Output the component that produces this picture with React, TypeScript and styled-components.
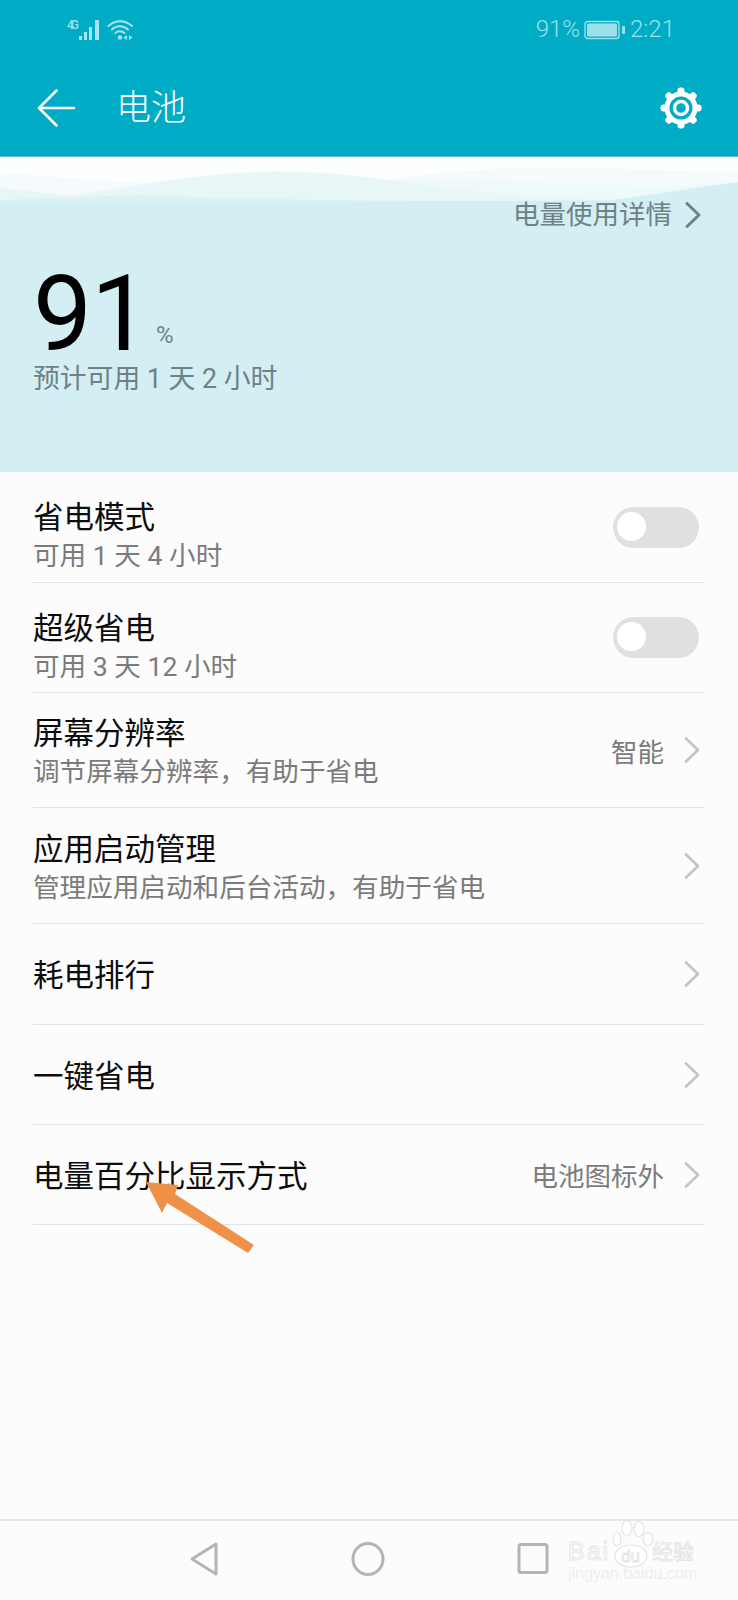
import React from "react";
import styled, { createGlobalStyle } from "styled-components";

const GlobalStyle = createGlobalStyle`
  html, body {
    margin: 0;
    padding: 0;
    background: #fcfcfc;
  }
  * {
    box-sizing: border-box;
  }
`;

const FONT = `Roboto, "Noto Sans CJK SC", sans-serif`;

const Page = styled.div`
  position: relative;
  width: 738px;
  height: 1600px;
  display: flex;
  flex-direction: column;
  overflow: hidden;
  background: #fcfcfc;
  font-family: ${FONT};
`;

const Header = styled.header`
  height: 157px;
  flex: none;
  background: #00acc5;
  border-bottom: 1px solid #5cc3d2;
`;

const StatusBar = styled.div`
  height: 59px;
  padding: 17px 63px 0 67px;
  display: flex;
  align-items: flex-start;
  justify-content: space-between;
  color: #9ce0ea;
`;

const StatusGroup = styled.div`
  display: flex;
  align-items: center;
  gap: 4px;
  height: 25px;
`;

const StatusText = styled.span`
  font-size: 24px;
  line-height: 25px;
  font-weight: 300;
`;

const Toolbar = styled.div`
  height: 97px;
  padding: 0 36px 0 37px;
  display: flex;
  align-items: center;
  color: #fff;
`;

const Title = styled.h1`
  margin: 3px 0 0 39px;
  flex: 1;
  font-size: 35px;
  font-weight: 300;
  line-height: 44px;
`;

const Hero = styled.section`
  height: 315px;
  flex: none;
  display: flex;
  flex-direction: column;
  background: #d4eff3;
`;

const Waves = styled.svg`
  display: block;
  flex: none;
`;

const DetailLink = styled.div`
  padding: 1px 35px 0 0;
  display: flex;
  justify-content: flex-end;
  align-items: center;
  gap: 13px;
  height: 27px;
  line-height: 26px;
  font-size: 26.5px;
  color: #6d8186;
`;

const Reading = styled.div`
  margin-top: 37px;
  padding-left: 33px;
  display: flex;
  align-items: flex-end;
  height: 96px;
`;

const Big = styled.span`
  margin-bottom: 6px;
  font-size: 105px;
  line-height: 80px;
  font-weight: 400;
  color: #000;
  letter-spacing: -1px;
`;

const Percent = styled.span`
  margin: 0 0 14px 7px;
  font-size: 24px;
  line-height: 24px;
  color: #6d8186;
`;

const Estimate = styled.div`
  padding-left: 33px;
  font-size: 26.8px;
  line-height: 36px;
  color: #6d8186;
`;

const List = styled.div`
  flex: 1;
  padding: 0 33px;
`;

const Row = styled.div<{ $h: number }>`
  height: ${(p) => p.$h}px;
  display: flex;
  align-items: center;
  border-bottom: 1px solid #e3e3e3;
`;

const RowText = styled.div<{ $drop: number }>`
  flex: 1;
  padding-top: ${(p) => p.$drop}px;
  display: flex;
  flex-direction: column;
`;

const RowTitle = styled.div`
  font-size: 30.5px;
  line-height: 40px;
  color: #0c0c0c;
`;

const RowSub = styled.div`
  font-size: 26.6px;
  line-height: 36px;
  color: #7b7b7b;
`;

const RowValue = styled.span`
  margin-right: 20px;
  font-size: 26.5px;
  color: #7b7b7b;
`;

const Chevron = styled.svg<{ $end: number }>`
  display: block;
  flex: none;
  margin-right: ${(p) => p.$end}px;
`;

const Toggle = styled.div`
  width: 86px;
  height: 41px;
  margin-right: 6px;
  border-radius: 21px;
  background: #e0e0e0;
  padding: 5px 0 0 4px;
  flex: none;
  &::before {
    content: "";
    display: block;
    width: 29px;
    height: 29px;
    border-radius: 50%;
    background: #fff;
  }
`;

const NavBar = styled.nav`
  height: 81px;
  flex: none;
  border-top: 2px solid #e8e8e8;
  padding: 20px 0 0 189px;
  display: flex;
  align-items: flex-start;
  gap: 132px;
`;

const Arrow = styled.svg`
  position: absolute;
  left: 140px;
  top: 1175px;
`;

const Watermark = styled.div`
  position: absolute;
  left: 566px;
  top: 1518px;
  width: 140px;
  height: 64px;
`;

const WatermarkBrand = styled.div`
  position: absolute;
  left: 2px;
  top: 19px;
  font-family: "Liberation Sans", sans-serif;
  font-size: 25px;
  line-height: 28px;
  letter-spacing: 2px;
  color: #fff;
  -webkit-text-stroke: 1px #e6e6e6;
`;

const WatermarkCn = styled.div`
  position: absolute;
  left: 86px;
  top: 19px;
  font-family: "Noto Sans CJK SC", sans-serif;
  font-size: 21px;
  line-height: 26px;
  color: #fff;
  -webkit-text-stroke: 1px #e6e6e6;
`;

const WatermarkUrl = styled.div`
  position: absolute;
  left: 2px;
  top: 47px;
  font-family: "Liberation Sans", sans-serif;
  font-size: 16px;
  line-height: 18px;
  color: #eeeeee;
  white-space: nowrap;
`;

const Paw = styled.svg`
  position: absolute;
  left: 46px;
  top: 2px;
`;

const ChevronIcon = ({ color = "#c4c4c4", w = 2.6, end = 5 }: { color?: string; w?: number; end?: number }) => (
  <Chevron $end={end} width="16" height="26" viewBox="0 0 16 26">
    <path d="M2 1.5 L14 13 L2 24.5" fill="none" stroke={color} strokeWidth={w} strokeLinecap="round" strokeLinejoin="round" />
  </Chevron>
);

const SignalIcons = () => (
  <svg width="66" height="24" viewBox="0 -1 66 24">
    <text x="0" y="10" fontFamily="Roboto, sans-serif" fontSize="12" fontWeight="500" fill="#9ce0ea" textLength="12">4G</text>
    <g fill="#a8e4ed">
      <rect x="12" y="17" width="3" height="4" />
      <rect x="17" y="13" width="3" height="8" />
      <rect x="22" y="8" width="3" height="13" />
      <rect x="28" y="1" width="4" height="20" />
    </g>
    <g fill="none" stroke="#a8e4ed" strokeWidth="2" strokeLinecap="round">
      <path d="M41.5 7 C48 0.5 58 0.5 65 7" />
      <path d="M45 10.5 C49 6 56.5 6 61 10.5" />
      <path d="M48.5 14 C50.5 11.5 55 11.5 57.5 14" />
    </g>
    <circle cx="53" cy="18.5" r="2.2" fill="#a8e4ed" />
    <path d="M60 16 L56.5 18.5 L60 21 Z M62 16 L65.5 18.5 L62 21 Z" fill="#a8e4ed" />
  </svg>
);

const BatteryIcon = () => (
  <svg width="42" height="20" viewBox="0 0 42 20">
    <rect x="1" y="1.5" width="34" height="17" rx="2.5" fill="none" stroke="#9ce0ea" strokeWidth="1.4" />
    <rect x="3" y="3.5" width="30" height="13" rx="1" fill="#9ce0ea" />
    <rect x="38" y="6" width="3" height="8" rx="1" fill="#9ce0ea" />
  </svg>
);

const BackIcon = () => (
  <svg width="40" height="40" viewBox="0 0 40 40">
    <path d="M19.5 2.5 L2 20 L19.5 37.5 M2 20 L37 20" fill="none" stroke="#fff" strokeWidth="2.6" strokeLinecap="round" strokeLinejoin="round" />
  </svg>
);

const GearIcon = () => {
  const teeth = [0, 45, 90, 135, 180, 225, 270, 315];
  return (
    <svg width="42" height="42" viewBox="0 0 42 42">
      {teeth.map((a) => (
        <rect key={a} x="17.5" y="0.5" width="7" height="8" rx="3" fill="#fff" transform={`rotate(${a} 21 21)`} />
      ))}
      <circle cx="21" cy="21" r="14" fill="none" stroke="#fff" strokeWidth="5" />
      <circle cx="21" cy="21" r="6.5" fill="none" stroke="#fff" strokeWidth="3.4" />
    </svg>
  );
};

const rows = [
  { h: 111, title: "省电模式", sub: "可用 1 天 4 小时", toggle: true, drop: 18 },
  { h: 110, title: "超级省电", sub: "可用 3 天 12 小时", toggle: true, drop: 18 },
  { h: 115, title: "屏幕分辨率", sub: "调节屏幕分辨率，有助于省电", value: "智能", drop: 4 },
  { h: 116, title: "应用启动管理", sub: "管理应用启动和后台活动，有助于省电", drop: 4 },
  { h: 101, title: "耗电排行", drop: 4 },
  { h: 100, title: "一键省电", drop: 4 },
  { h: 100, title: "电量百分比显示方式", value: "电池图标外", drop: 4 },
];

const App = () => {
  return (
    <Page>
      <GlobalStyle />
      <Header>
        <StatusBar>
          <StatusGroup>
            <SignalIcons />
          </StatusGroup>
          <StatusGroup>
            <StatusText>91%</StatusText>
            <BatteryIcon />
            <StatusText>2:21</StatusText>
          </StatusGroup>
        </StatusBar>
        <Toolbar>
          <BackIcon />
          <Title>电池</Title>
          <GearIcon />
        </Toolbar>
      </Header>
      <Hero>
        <Waves width="738" height="44" viewBox="0 0 738 44">
          <rect width="738" height="44" fill="#fdfefe" />
          <path d="M0 16 C50 19 100 24 141 26 C190 20 240 13 292 14 C330 15 360 19 390 23 C440 14 490 11 541 11 C610 11 680 13 738 16 L738 44 L0 44 Z" fill="#f5fbfc" />
          <path d="M390 23 C450 22 520 24 600 28 C650 30 700 28 738 25 L738 44 L390 44 Z" fill="#eef9fa" />
          <path d="M0 30 C25 34 45 36 73 38 C130 30 190 18 260 15 C310 14 350 18 390 23 C450 33 510 40 612 43 L612 44 L0 44 Z" fill="#e8f6f8" />
          <path d="M0 43 C50 41 100 39 140 38 C240 42 400 46 612 43 L612 44 L0 44 Z" fill="#dcf2f5" />
          <path d="M612 43 C650 38 700 30 738 25 L738 44 L612 44 Z" fill="#d4eff3" />
        </Waves>
        <DetailLink>
          <span>电量使用详情</span>
          <ChevronIcon color="#6d8186" w={3} end={2} />
        </DetailLink>
        <Reading>
          <Big>91</Big>
          <Percent>%</Percent>
        </Reading>
        <Estimate>预计可用 1 天 2 小时</Estimate>
      </Hero>
      <List>
        {rows.map((r) => (
          <Row key={r.title} $h={r.h}>
            <RowText $drop={r.drop}>
              <RowTitle>{r.title}</RowTitle>
              {r.sub && <RowSub>{r.sub}</RowSub>}
            </RowText>
            {r.value && <RowValue>{r.value}</RowValue>}
            {r.toggle ? <Toggle /> : <ChevronIcon />}
          </Row>
        ))}
      </List>
      <NavBar>
        <svg width="30" height="36" viewBox="0 0 30 36">
          <path d="M27 3 L3 18 L27 33 Z" fill="none" stroke="#b4b4b4" strokeWidth="3" strokeLinejoin="round" />
        </svg>
        <svg width="34" height="36" viewBox="0 0 34 36">
          <ellipse cx="17" cy="18" rx="15" ry="15.5" fill="none" stroke="#b4b4b4" strokeWidth="3" />
        </svg>
        <svg width="32" height="36" viewBox="0 0 32 36">
          <rect x="2" y="3.5" width="28" height="28" rx="2" fill="none" stroke="#b4b4b4" strokeWidth="3" />
        </svg>
      </NavBar>
      <Arrow width="120" height="85" viewBox="0 0 120 85">
        <path d="M6 7 L38 10 L35 19 L114 70 L108 78 L27 28 L22 38 Z" fill="#ef9148" />
      </Arrow>
      <Watermark>
        <Paw width="44" height="50" viewBox="0 0 44 50">
          <g fill="#fff" stroke="#e4e4e4" strokeWidth="1.2">
            <ellipse cx="15" cy="8" rx="5" ry="7.5" />
            <ellipse cx="27" cy="9" rx="5" ry="7.5" />
            <ellipse cx="5" cy="19" rx="4" ry="6.5" />
            <ellipse cx="36" cy="19" rx="5" ry="6.5" />
            <ellipse cx="19" cy="36" rx="16" ry="11" />
          </g>
          <text x="9" y="42" fontFamily="Liberation Sans, sans-serif" fontSize="17" fill="#fff" stroke="#dedede" strokeWidth="0.8">du</text>
        </Paw>
        <WatermarkBrand>Bai</WatermarkBrand>
        <WatermarkCn>经验</WatermarkCn>
        <WatermarkUrl>jingyan.baidu.com</WatermarkUrl>
      </Watermark>
    </Page>
  );
};

export default App;
